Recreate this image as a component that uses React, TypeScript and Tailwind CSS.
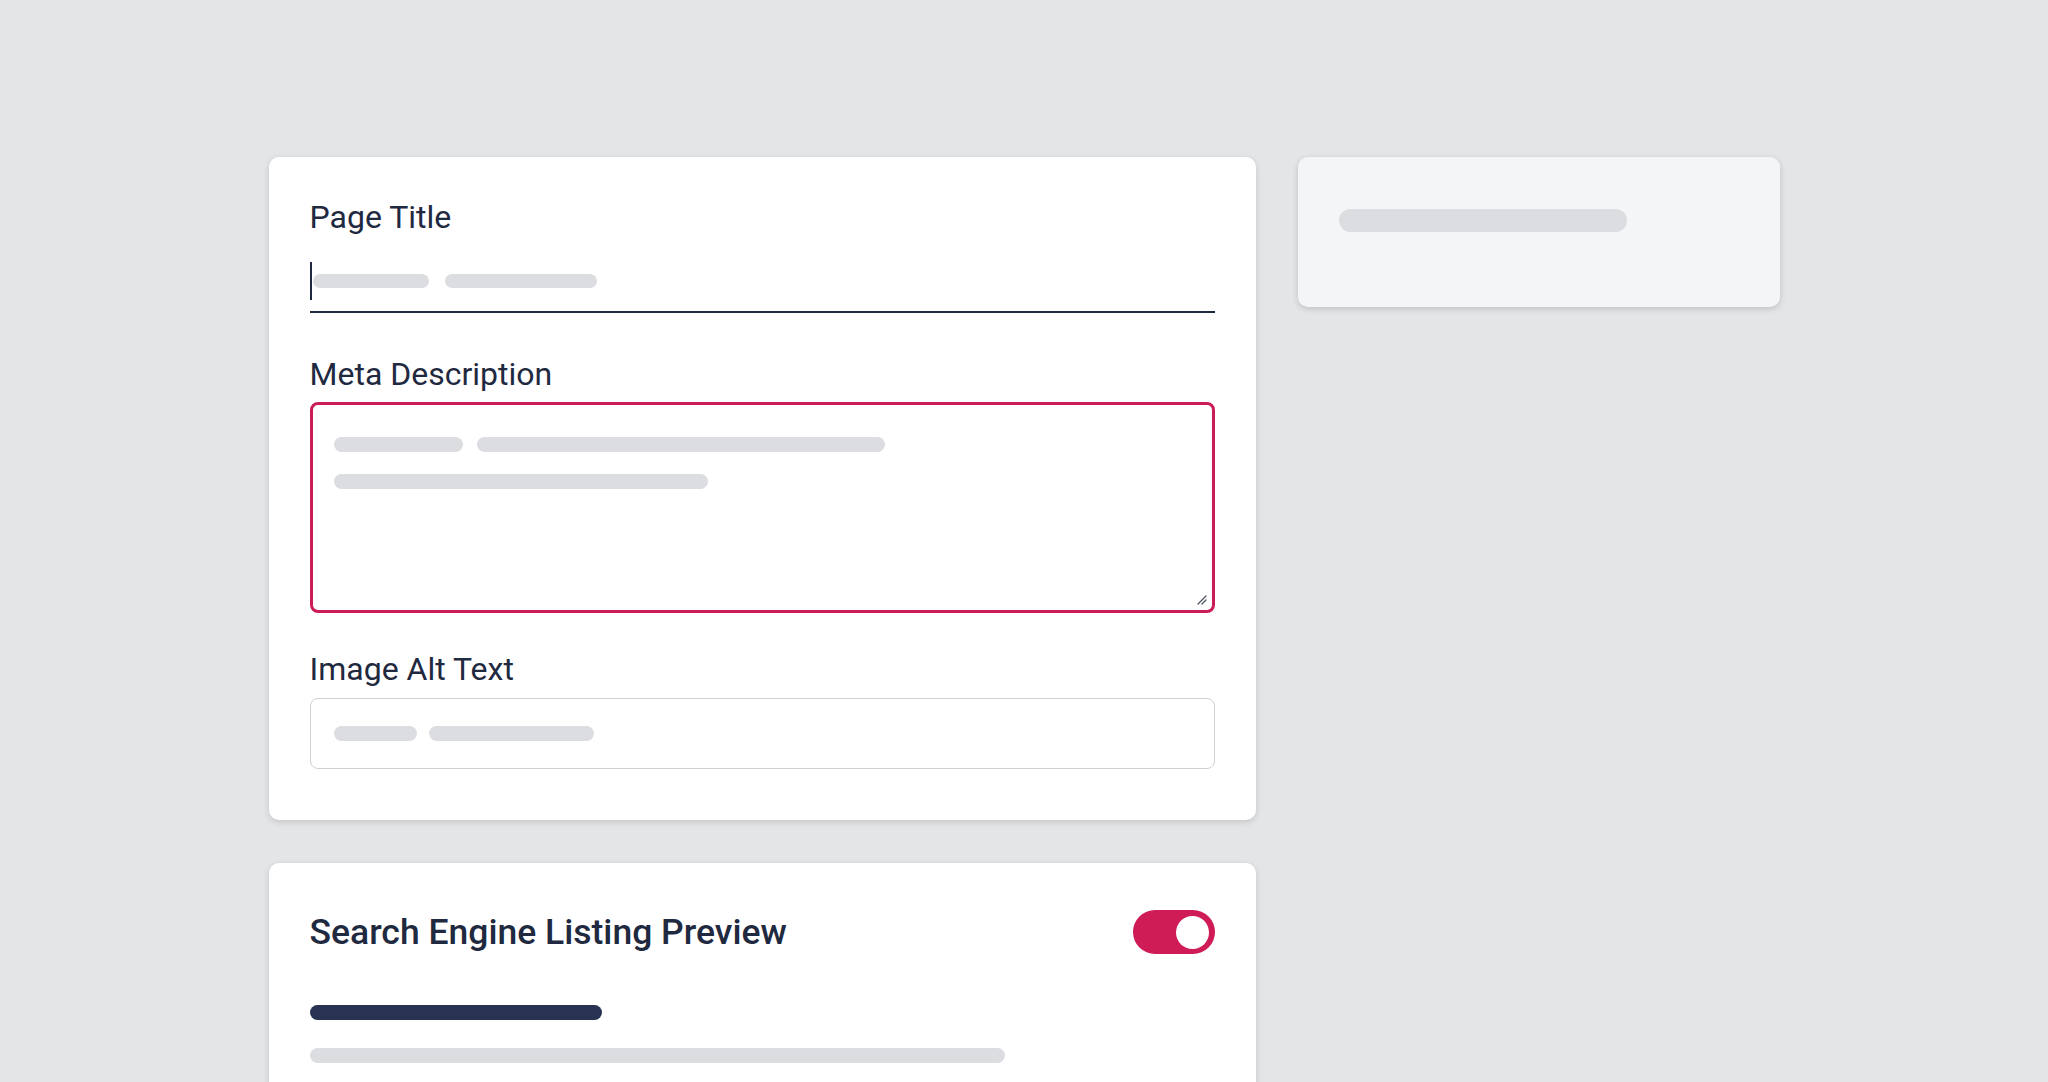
import React from 'react'

function Pill({ w, h = 'h-[14px]', color = 'bg-[#dcdde1]' }: { w: string; h?: string; color?: string }) {
  return <div className={`${w} ${h} ${color} shrink-0 rounded-full`} />
}

function ResizeGrip() {
  return (
    <svg className="absolute bottom-[5px] right-[5px]" width="12" height="12" viewBox="0 0 12 12" fill="none">
      <path d="M11 3 L3 11 M11 7 L7 11" stroke="#4b5060" strokeWidth="1.2" strokeLinecap="round" />
    </svg>
  )
}

export default function App() {
  return (
    <div
      className="h-screen w-full overflow-hidden bg-[#e4e5e7] text-[#1f2940]"
      style={{ fontFamily: 'Roboto, "Noto Sans", "Liberation Sans", sans-serif' }}
    >
      <div className="mx-auto flex w-[1511px] items-start gap-[42px] pt-[157px]">
        {/* Left column */}
        <div className="flex w-[987px] shrink-0 flex-col gap-[43px]">
          {/* Fields card */}
          <div className="rounded-[10px] bg-white px-[41px] pb-[51px] pt-[41px] shadow-[0_2px_6px_rgba(0,0,0,0.14)]">
            <label className="block text-[32px] leading-[38px]">Page Title</label>
            <div className="mt-[10px] flex h-[67px] items-center gap-[16px] border-b-2 border-[#1f2940] pt-[5px]">
              <div className="h-[38px] w-[2px] shrink-0 bg-[#1f2940]" />
              <div className="-ml-[15px] flex gap-[16px]">
                <Pill w="w-[116px]" />
                <Pill w="w-[152px]" />
              </div>
            </div>

            <label className="mt-[42px] block text-[32px] leading-[38px]">Meta Description</label>
            <div className="relative mt-[9px] h-[211px] rounded-[8px] border-[3px] border-[#cb1d55] px-[21px] pt-[32px]">
              <div className="flex gap-[14px]">
                <Pill w="w-[129px]" h="h-[15px]" />
                <Pill w="w-[408px]" h="h-[15px]" />
              </div>
              <div className="mt-[22px] flex">
                <Pill w="w-[374px]" h="h-[15px]" />
              </div>
              <ResizeGrip />
            </div>

            <label className="mt-[37px] block text-[32px] leading-[38px]">Image Alt Text</label>
            <div className="mt-[10px] flex h-[71px] items-center gap-[12px] rounded-[8px] border-[1.5px] border-[#cdd0d5] px-[23px]">
              <Pill w="w-[83px]" h="h-[15px]" />
              <Pill w="w-[165px]" h="h-[15px]" />
            </div>
          </div>

          {/* Search preview card */}
          <div className="rounded-[10px] bg-white px-[41px] pb-[40px] pt-[47px] shadow-[0_2px_6px_rgba(0,0,0,0.14)]">
            <div className="flex h-[44px] items-center justify-between">
              <h2 className="text-[35.5px] font-medium leading-[40px]">Search Engine Listing Preview</h2>
              <button className="flex h-[44px] w-[82px] items-center justify-end rounded-full bg-[#cf1b56] pr-[6px]">
                <span className="h-[33px] w-[33px] rounded-full bg-white" />
              </button>
            </div>
            <div className="mt-[51px] flex">
              <Pill w="w-[292px]" h="h-[15px]" color="bg-[#283352]" />
            </div>
            <div className="mt-[28px] flex">
              <Pill w="w-[695px]" h="h-[15px]" />
            </div>
            <div className="mt-[28px] flex">
              <Pill w="w-[520px]" h="h-[15px]" />
            </div>
          </div>
        </div>

        {/* Right column */}
        <div className="h-[150px] w-[482px] shrink-0 rounded-[10px] bg-[#f4f5f7] px-[41px] pt-[52px] shadow-[0_2px_6px_rgba(0,0,0,0.16)]">
          <Pill w="w-[288px]" h="h-[23px]" />
        </div>
      </div>
    </div>
  )
}
